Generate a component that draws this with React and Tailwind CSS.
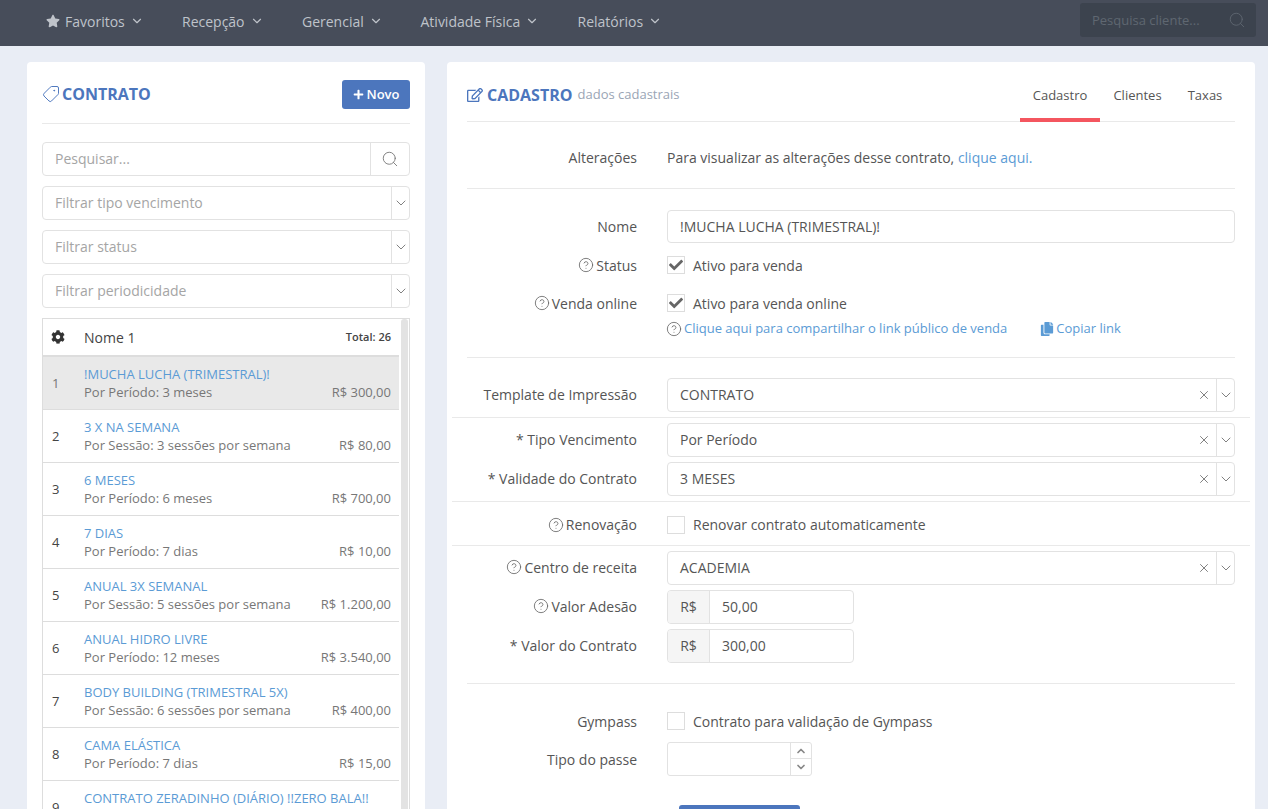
import React from "react";
import { ChevronDown, Search, Tag, CircleHelp, X, ChevronUp } from "lucide-react";
import { FaStar, FaPlus, FaCog, FaRegEdit, FaCheck, FaCopy } from "react-icons/fa";

const nav = ["Recepção", "Gerencial", "Atividade Física", "Relatórios"];
const rows = [
  ["!MUCHA LUCHA (TRIMESTRAL)!", "Por Período: 3 meses", "R$ 300,00"],
  ["3 X NA SEMANA", "Por Sessão: 3 sessões por semana", "R$ 80,00"],
  ["6 MESES", "Por Período: 6 meses", "R$ 700,00"],
  ["7 DIAS", "Por Período: 7 dias", "R$ 10,00"],
  ["ANUAL 3X SEMANAL", "Por Sessão: 5 sessões por semana", "R$ 1.200,00"],
  ["ANUAL HIDRO LIVRE", "Por Período: 12 meses", "R$ 3.540,00"],
  ["BODY BUILDING (TRIMESTRAL 5X)", "Por Sessão: 6 sessões por semana", "R$ 400,00"],
  ["CAMA ELÁSTICA", "Por Período: 7 dias", "R$ 15,00"],
  ["CONTRATO ZERADINHO (DIÁRIO) !!ZERO BALA!!", "", ""],
];

function Help({ className = "" }) {
  return <CircleHelp size={16} strokeWidth={1.25} className={`mr-[2px] text-[#666] ${className}`} />;
}

function Row({ label, help, up, className = "", children }) {
  return (
    <div className={`flex items-center ${className}`}>
      <div className={`w-[170px] shrink-0 flex justify-end items-center text-[14px] text-[#555] ${up ? "pb-[2px]" : ""}`}>
        {help && <Help />}
        <span>{label}</span>
      </div>
      <div className="ml-[30px] flex-1 min-w-0">{children}</div>
    </div>
  );
}

function Check({ checked, label }) {
  return (
    <div className="flex items-center h-[34px] text-[14px] text-[#555]">
      <span className="w-[18px] h-[18px] border border-[#ddd] flex items-center justify-center bg-white">
        {checked && <FaCheck size={14} className="text-[#666]" />}
      </span>
      <span className="ml-[8px]">{label}</span>
    </div>
  );
}

function ClearSelect({ value }) {
  return (
    <div className="h-[34px] border border-[#e2e2e2] rounded-[4px] flex items-center bg-white text-[14px] text-[#555]">
      <span className="flex-1 pl-[12px] pb-[2px]">{value}</span>
      <X size={14} strokeWidth={1.6} className="text-[#777] mr-[5px]" />
      <span className="w-[18px] h-full border-l border-[#e2e2e2] flex items-center justify-center">
        <ChevronDown size={16} strokeWidth={1.4} className="text-[#777]" />
      </span>
    </div>
  );
}

function FilterSelect({ placeholder }) {
  return (
    <div className="h-[34px] border border-[#e2e2e2] rounded-[4px] flex items-center bg-white text-[14px] text-[#a5a5a5] mb-[10px]">
      <span className="flex-1 pl-[12px] pb-[2px]">{placeholder}</span>
      <span className="w-[18px] h-full border-l border-[#e2e2e2] flex items-center justify-center">
        <ChevronDown size={16} strokeWidth={1.4} className="text-[#777]" />
      </span>
    </div>
  );
}

function Money({ value }) {
  return (
    <div className="w-[187px] h-[34px] border border-[#e2e2e2] rounded-[4px] flex items-center text-[14px] text-[#555] bg-white overflow-hidden">
      <span className="w-[42px] h-full bg-[#f5f5f5] border-r border-[#e2e2e2] flex items-center justify-center pb-[2px]">R$</span>
      <span className="pl-[12px] pb-[2px]">{value}</span>
    </div>
  );
}

const Divider = ({ className = "" }) => <div className={`h-px bg-[#e9e9e9] ${className}`} />;

export default function App() {
  return (
    <div className="h-[809px] overflow-hidden bg-[#e9edf5] font-['Open_Sans',sans-serif]">
      <header className="h-[46px] bg-[#474d5a] flex items-center pl-[46px] pr-[12px] pb-[6px] text-[14px] text-[#bfc3ca]">
        <div className="flex items-center w-[136px] mt-[2px]">
          <FaStar size={14} className="mr-[5px]" />
          <span>Favoritos</span>
          <ChevronDown size={14} strokeWidth={2} className="ml-[5px]" />
        </div>
        {nav.map((n, i) => (
          <div key={n} className={`flex items-center mt-[2px] ${["w-[120px]", "w-[118.5px]", "w-[157px]", "w-[100px]"][i]}`}>
            <span>{n}</span>
            <ChevronDown size={14} strokeWidth={2} className="ml-[5px]" />
          </div>
        ))}
        <div className="ml-auto w-[176px] h-[34px] bg-[#3c434e] rounded-[3px] flex items-center pl-[12px] pr-[10px] text-[13px] text-[#5f6771]">
          <span className="flex-1 pt-[2px]">Pesquisa cliente...</span>
          <Search size={18} strokeWidth={1.2} />
        </div>
      </header>

      <main className="flex items-start pt-[16px] pl-[27px] pr-[13px] gap-[22px]">
        <section className="w-[398px] shrink-0 bg-white rounded-[4px] px-[15px] h-[800px]">
          <div className="h-[62px] flex items-center justify-between border-b border-[#e9e9e9] pt-[2px]">
            <div className="flex items-center text-[#4c76bd] text-[16px] font-bold">
              <Tag size={18} strokeWidth={1.3} className="mr-[2px] -scale-x-100" />
              CONTRATO
            </div>
            <button className="h-[29px] w-[68px] bg-[#4c76bd] rounded-[3px] text-white text-[13px] font-semibold flex items-center justify-center mt-[2px]">
              <FaPlus size={11} className="mr-[3px]" />
              Novo
            </button>
          </div>

          <div className="h-[34px] mt-[18px] mb-[10px] border border-[#e2e2e2] rounded-[4px] flex items-center text-[14px] text-[#a5a5a5]">
            <span className="flex-1 pl-[12px] pb-[1px]">Pesquisar...</span>
            <span className="w-[39px] h-full border-l border-[#e2e2e2] flex items-center justify-center">
              <Search size={18} strokeWidth={1.2} className="text-[#777]" />
            </span>
          </div>
          <FilterSelect placeholder="Filtrar tipo vencimento" />
          <FilterSelect placeholder="Filtrar status" />
          <FilterSelect placeholder="Filtrar periodicidade" />

          <div className="border border-[#ddd] border-b-0 flex">
            <div className="w-[356px] shrink-0">
              <div className="h-[38px] border-b-[2px] border-[#ddd] flex items-center text-[#444]">
                <span className="w-[41px] pl-[8px]"><FaCog size={14} className="text-[#333]" /></span>
                <span className="text-[14px] font-medium flex-1">Nome 1</span>
                <span className="text-[11px] font-semibold pr-[8px]">Total: 26</span>
              </div>
              {rows.map((r, i) => (
                <div key={r[0]} className={`h-[53px] flex border-b border-[#ddd] ${i === 0 ? "bg-[#e9e9e9]" : ""}`}>
                  <span className={`w-[41px] pl-[9px] pt-[2px] text-[13px] flex items-center ${i === 0 ? "text-[#777]" : "text-[#444]"}`}>{i + 1}</span>
                  <div className="flex-1 pr-[8px] pt-[8px]">
                    <div className="text-[13px] leading-[18px] text-[#5b9bd5] whitespace-nowrap">{r[0]}</div>
                    <div className="flex justify-between text-[13px] leading-[18px] text-[#777]">
                      <span>{r[1]}</span>
                      <span>{r[2]}</span>
                    </div>
                  </div>
                </div>
              ))}
            </div>
            <div className="ml-[2px] w-[7px] bg-[#e3e3e3] rounded-t-[3px]" />
          </div>
        </section>

        <section className="flex-1 min-w-0 bg-white rounded-[4px] h-[800px]">
          <div className="mx-[20px] h-[60px] flex items-start justify-between border-b border-[#e9e9e9]">
            <div className="flex items-center pt-[21px]">
              <FaRegEdit size={16} className="text-[#4c76bd] mr-[4px]" />
              <span className="text-[16px] font-bold text-[#4c76bd]">CADASTRO</span>
              <span className="ml-[5px] text-[13px] text-[#9aa5b5]">dados cadastrais</span>
            </div>
            <div className="flex text-[13px] text-[#555] mt-[17px]">
              <div className="w-[80px] h-[43px] pt-[7px] text-center border-b-[4px] border-[#f4565f]">Cadastro</div>
              <div className="w-[75px] pt-[7px] text-center">Clientes</div>
              <div className="w-[60px] pt-[7px] text-center">Taxas</div>
            </div>
          </div>

          <div className="mx-[20px]">
            <Row label="Alterações" className="h-[66px] pt-[4px]">
              <span className="text-[14px] text-[#555]">
                Para visualizar as alterações desse contrato, <span className="text-[#5b9bd5]">clique aqui.</span>
              </span>
            </Row>
            <Divider />
            <Row label="Nome" className="mt-[21px]">
              <div className="h-[33px] border border-[#e2e2e2] rounded-[4px] flex items-center pl-[12px] text-[14px] text-[#555]">!MUCHA LUCHA (TRIMESTRAL)!</div>
            </Row>
            <Row label="Status" help className="mt-[5px]"><Check checked label="Ativo para venda" /></Row>
            <Row label="Venda online" help className="mt-[4px]"><Check checked label="Ativo para venda online" /></Row>
            <Row label="" className="h-[15px] mt-[1px]">
              <div className="flex items-center text-[13px] text-[#5b9bd5]">
                <Help className="-ml-[1px]" />
                <span>Clique aqui para compartilhar o link público de venda</span>
                <FaCopy size={14} className="ml-[33px] mr-[2px]" />
                <span>Copiar link</span>
              </div>
            </Row>
            <Divider className="mt-[21px]" />
            <Row label="Template de Impressão" up className="mt-[20px]"><ClearSelect value="CONTRATO" /></Row>
          </div>
          <Divider className="mt-[5px] mx-[5px]" />
          <div className="mx-[20px]">
            <Row label="* Tipo Vencimento" up className="mt-[5px]"><ClearSelect value="Por Período" /></Row>
            <Row label="* Validade do Contrato" up className="mt-[5px]"><ClearSelect value="3 MESES" /></Row>
          </div>
          <Divider className="mt-[5px] mx-[5px]" />
          <div className="mx-[20px]">
            <Row label="Renovação" help className="h-[43px] pt-[2px]"><Check label="Renovar contrato automaticamente" /></Row>
          </div>
          <Divider className="mx-[5px]" />
          <div className="mx-[20px]">
            <Row label="Centro de receita" help up className="mt-[5px]"><ClearSelect value="ACADEMIA" /></Row>
            <Row label="Valor Adesão" help up className="mt-[5px]"><Money value="50,00" /></Row>
            <Row label="* Valor do Contrato" up className="mt-[5px]"><Money value="300,00" /></Row>
            <Divider className="mt-[20px]" />
            <Row label="Gympass" className="mt-[20px]"><Check label="Contrato para validação de Gympass" /></Row>
            <Row label="Tipo do passe" className="mt-[4px]">
              <div className="w-[145px] h-[34px] border border-[#e2e2e2] rounded-[3px] flex justify-end">
                <div className="w-[21px] h-full border-l border-[#e2e2e2] flex flex-col text-[#888]">
                  <span className="h-1/2 flex items-center justify-center border-b border-[#e2e2e2]"><ChevronUp size={12} strokeWidth={3.5} /></span>
                  <span className="h-1/2 flex items-center justify-center"><ChevronDown size={12} strokeWidth={3.5} /></span>
                </div>
              </div>
            </Row>
            <div className="ml-[212px] mt-[29px] w-[121px] h-[34px] bg-[#4c76bd] rounded-[3px]" />
          </div>
        </section>
      </main>
    </div>
  );
}
